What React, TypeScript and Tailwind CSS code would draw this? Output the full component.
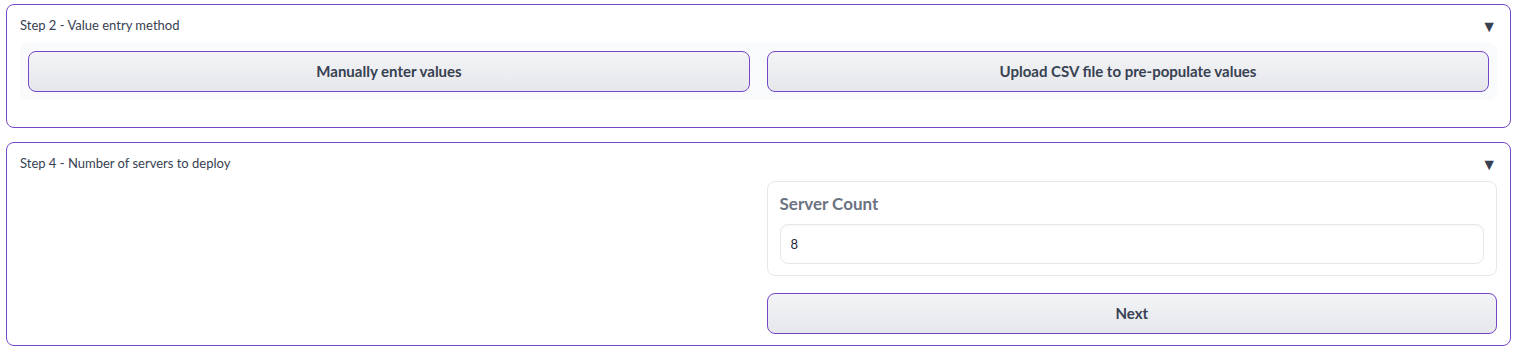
const font = { fontFamily: "Lato, 'Noto Sans', sans-serif" };

function Caret() {
  return <span className="text-[16px] leading-none text-[#374151]">▼</span>;
}

function PurpleButton({ label }: { label: string }) {
  return (
    <button className="h-[41px] w-full rounded-lg border border-[#7547c6] bg-gradient-to-b from-[#f3f4f6] to-[#e5e7eb] text-[15px] font-bold text-[#374151]">
      {label}
    </button>
  );
}

export default function App() {
  return (
    <div className="min-h-screen bg-white px-[6px] pt-[4px]" style={font}>
      {/* Step 2 */}
      <div className="rounded-lg border border-[#7547c6] px-[13px] pt-[13px] pb-[27px]">
        <div className="flex h-[16px] items-center justify-between">
          <span className="text-[13px] text-[#374151]">Step 2 - Value entry method</span>
          <Caret />
        </div>
        <div className="mt-[9px] grid grid-cols-2 gap-[17px] rounded-lg bg-[#f9fafb] p-[8px]">
          <PurpleButton label="Manually enter values" />
          <PurpleButton label="Upload CSV file to pre-populate values" />
        </div>
      </div>

      {/* Step 4 */}
      <div className="mt-[14px] rounded-lg border border-[#7547c6] px-[13px] pt-[13px] pb-[11px]">
        <div className="flex h-[16px] items-center justify-between">
          <span className="text-[13px] text-[#374151]">Step 4 - Number of servers to deploy</span>
          <Caret />
        </div>
        <div className="mt-[9px] grid grid-cols-2 gap-[16px]">
          <div />
          <div className="flex flex-col gap-[17px]">
            <div className="rounded-lg border border-[#e5e7eb] px-[12px] pt-[11px] pb-[11px]">
              <div className="text-[17px] font-bold leading-[22px] text-[#6b7280]">Server Count</div>
              <input
                readOnly
                value="8"
                className="mt-[9px] h-[40px] w-full rounded-lg border border-[#e5e7eb] px-[10px] text-[13px] text-[#1f2937] shadow-[inset_0_1px_2px_rgba(0,0,0,0.04)] outline-none"
              />
            </div>
            <button className="h-[41px] w-full rounded-lg border border-[#7547c6] bg-gradient-to-b from-[#f3f4f6] to-[#e5e7eb] text-[15px] font-bold text-[#374151]">
              Next
            </button>
          </div>
        </div>
      </div>
    </div>
  );
}
